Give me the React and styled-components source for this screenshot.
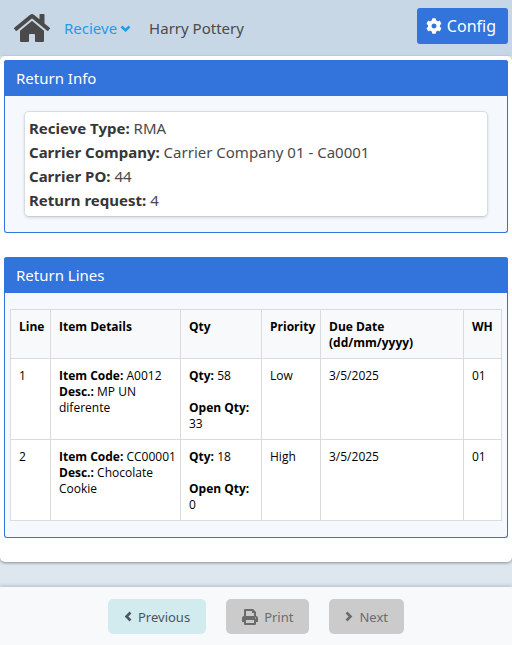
import React from "react";
import styled, { createGlobalStyle } from "styled-components";
import { FaHome, FaCog } from "react-icons/fa";

const GlobalStyle = createGlobalStyle`
  *, *::before, *::after { box-sizing: border-box; }
  body {
    margin: 0;
    background: #dee6ee;
    color: #4a4a4a;
    font-family: "Segoe UI", "Noto Sans", "Open Sans", sans-serif;
    font-size: 15px;
    line-height: 24px;
  }
  button { font-family: inherit; cursor: pointer; }
`;

const Page = styled.div`
  display: flex;
  flex-direction: column;
  min-height: 100vh;
`;

const NavBar = styled.nav`
  display: flex;
  align-items: center;
  gap: 14px;
  height: 56px;
  padding: 0 4px 0 14px;
  background: #c8d7e5;
`;

const HomeLink = styled.a`
  display: flex;
  color: #4a4a4a;
`;

const NavMenu = styled.button`
  display: flex;
  align-items: center;
  gap: 3px;
  padding: 0;
  border: 0;
  background: none;
  color: #229bee;
  font-size: 15px;
  line-height: 24px;
`;

const UserName = styled.span`
  margin-left: 4px;
`;

const ConfigButton = styled.button`
  display: flex;
  align-items: center;
  gap: 5px;
  height: 36px;
  margin: 0 0 4px auto;
  padding: 0 12px 0 9px;
  border: 0;
  border-radius: 3px;
  background: #3273dc;
  color: #fff;
  font-size: 16px;
  line-height: 24px;
`;

const Content = styled.main`
  display: flex;
  flex-direction: column;
  gap: 24px;
  padding: 4px 4px 24px;
  border-radius: 5px;
  background: #fff;
  box-shadow: 0 1px 3px rgba(10, 10, 10, 0.4);
`;

const Panel = styled.section`
  border: 1px solid #3273dc;
  border-top: 0;
  border-radius: 3px;
  background: #f5f9fe;
`;

const PanelTitle = styled.h2`
  margin: 0 -1px;
  padding: 6px 12px;
  border-radius: 3px 3px 0 0;
  background: #3273dc;
  color: #fff;
  font-size: 15px;
  font-weight: 400;
  line-height: 24px;
`;

const InfoBox = styled.div`
  margin: 15px 19px;
  padding: 4px;
  border: 1px solid #d8dde3;
  border-bottom-color: #c9cdd2;
  border-radius: 5px;
  background: #fff;
  box-shadow: 0 1px 3px rgba(10, 10, 10, 0.12);

  strong {
    color: #363636;
  }
`;

const TableWrap = styled.div`
  padding: 16px 5px;
`;

const Table = styled.table`
  width: 100%;
  table-layout: fixed;
  border-collapse: collapse;
  background: #fff;
  color: #000;
  font-family: "Segoe UI", "Open Sans", "Noto Sans", sans-serif;
  font-size: 12px;
  line-height: 16px;

  th,
  td {
    padding: 9px 0 7px 8px;
    border: 1px solid #dbdbdb;
    text-align: left;
    vertical-align: top;
  }

  th {
    background: #f8f9fb;
  }
`;

const Column = styled.col`
  width: ${({ $width }) => $width || "auto"};
`;

const CellLine = styled.div`
  max-width: ${({ $max }) => $max || "none"};
`;

const OpenQty = styled.div`
  max-width: 64px;
  margin-top: 16px;
`;

const Footer = styled.footer`
  position: sticky;
  bottom: 0;
  display: flex;
  justify-content: center;
  gap: 20px;
  margin-top: auto;
  padding: 12px 0 11px;
  background: #f8f9fb;
  box-shadow: 0 -1px 4px rgba(10, 10, 10, 0.2);
`;

const ActionButton = styled.button`
  display: flex;
  align-items: center;
  justify-content: center;
  gap: 6px;
  height: 35px;
  padding: 0 16px;
  border: 0;
  border-radius: 5px;
  background: ${({ $primary }) => ($primary ? "#d1ebef" : "#cbcbcb")};
  color: ${({ $primary }) => ($primary ? "#4d5560" : "#6b6b6b")};
  font-size: 13px;
  line-height: 24px;
`;

const chevronPaths = {
  down: "M1.5 3.5 L5.5 7.3 L9.5 3.5",
  left: "M6.5 1.5 L2.5 5.5 L6.5 9.5",
  right: "M1.5 1.5 L5.5 5.5 L1.5 9.5",
};

function Chevron({ direction }) {
  const width = direction === "down" ? 11 : 8;
  return (
    <svg width={width} height="11" viewBox={`0 0 ${width} 11`} aria-hidden="true">
      <path d={chevronPaths[direction]} fill="none" stroke="currentColor" strokeWidth="2.6" />
    </svg>
  );
}

function Printer() {
  return (
    <svg width="16" height="16" viewBox="0 0 16 16" aria-hidden="true">
      <path
        fill="currentColor"
        fillRule="evenodd"
        d="M2 1q0-1 1-1h8l3 3v4q2 0 2 2v4h-2v2q0 1-1 1H3q-1 0-1-1v-2H0V9q0-2 2-2zM4 2v5h8V4h-2V2zM4 11v3h8v-3zM13 8.5v1h1v-1z"
      />
    </svg>
  );
}

const info = [
  ["Recieve Type:", "RMA"],
  ["Carrier Company:", "Carrier Company 01 - Ca0001"],
  ["Carrier PO:", "44"],
  ["Return request:", "4"],
];

const lines = [
  { line: 1, code: "A0012", desc: "MP UN diferente", qty: 58, open: 33, priority: "Low", due: "3/5/2025", wh: "01" },
  { line: 2, code: "CC00001", desc: "Chocolate Cookie", qty: 18, open: 0, priority: "High", due: "3/5/2025", wh: "01" },
];

export default function App() {
  return (
    <Page>
      <GlobalStyle />
      <NavBar>
        <HomeLink href="#" aria-label="Home">
          <FaHome size={36} />
        </HomeLink>
        <NavMenu type="button" aria-haspopup="menu">
          Recieve <Chevron direction="down" />
        </NavMenu>
        <UserName>Harry Pottery</UserName>
        <ConfigButton type="button">
          <FaCog size={16} /> Config
        </ConfigButton>
      </NavBar>
      <Content>
        <Panel>
          <PanelTitle>Return Info</PanelTitle>
          <InfoBox>
            {info.map(([label, value]) => (
              <div key={label}>
                <strong>{label}</strong> {value}
              </div>
            ))}
          </InfoBox>
        </Panel>
        <Panel>
          <PanelTitle>Return Lines</PanelTitle>
          <TableWrap>
            <Table>
              <colgroup>
                <Column $width="40px" />
                <Column $width="130px" />
                <Column $width="81px" />
                <Column $width="59px" />
                <Column />
                <Column $width="38px" />
              </colgroup>
              <thead>
                <tr>
                  <th>Line</th>
                  <th>Item Details</th>
                  <th>Qty</th>
                  <th>Priority</th>
                  <th>
                    Due Date
                    <br />
                    (dd/mm/yyyy)
                  </th>
                  <th>WH</th>
                </tr>
              </thead>
              <tbody>
                {lines.map((row) => (
                  <tr key={row.line}>
                    <td>{row.line}</td>
                    <td>
                      <CellLine>
                        <strong>Item Code:</strong> {row.code}
                      </CellLine>
                      <CellLine $max="112px">
                        <strong>Desc.:</strong> {row.desc}
                      </CellLine>
                    </td>
                    <td>
                      <strong>Qty:</strong> {row.qty}
                      <OpenQty>
                        <strong>Open Qty:</strong> {row.open}
                      </OpenQty>
                    </td>
                    <td>{row.priority}</td>
                    <td>{row.due}</td>
                    <td>{row.wh}</td>
                  </tr>
                ))}
              </tbody>
            </Table>
          </TableWrap>
        </Panel>
      </Content>
      <Footer>
        <ActionButton type="button" $primary>
          <Chevron direction="left" /> Previous
        </ActionButton>
        <ActionButton type="button">
          <Printer /> Print
        </ActionButton>
        <ActionButton type="button">
          <Chevron direction="right" /> Next
        </ActionButton>
      </Footer>
    </Page>
  );
}
